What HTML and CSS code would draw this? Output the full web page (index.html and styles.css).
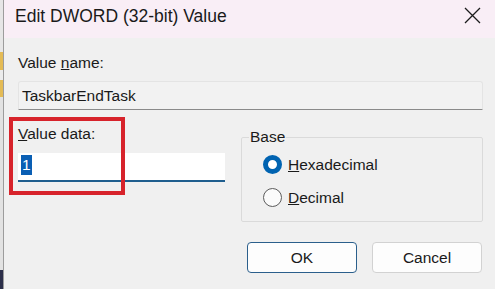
FILE: index.html
```html
<!DOCTYPE html>
<html lang="en">
<head>
  <meta charset="UTF-8">
  <meta name="viewport" content="width=device-width, initial-scale=1.0">
  <title>Edit DWORD (32-bit) Value</title>
  <link rel="stylesheet" href="styles.css">
</head>
<body>

  <!-- Window behind the dialog -->
  <div class="backdrop"></div>

  <div class="dialog">
    <!-- Title bar -->
    <div class="titlebar">
      <span class="title">Edit DWORD (32-bit) Value</span>
      <svg class="close" width="17" height="17" viewBox="0 0 17 17">
        <path d="M1 1 L16 16 M16 1 L1 16" stroke="#1c1c1c" stroke-width="1.3" fill="none"/>
      </svg>
    </div>

    <div class="content">
      <div class="label">Value <u>n</u>ame:</div>
      <div class="name-field">TaskbarEndTask</div>

      <div class="row">
        <div class="data-col">
          <div class="label"><u>V</u>alue data:</div>
          <div class="data-field"><span class="selected">1</span></div>
          <!-- Red annotation box -->
          <div class="marker"></div>
        </div>

        <fieldset class="base">
          <legend>Base</legend>
          <div class="radio-row">
            <span class="radio checked"></span>
            <span><u>H</u>exadecimal</span>
          </div>
          <div class="radio-row">
            <span class="radio"></span>
            <span><u>D</u>ecimal</span>
          </div>
        </fieldset>
      </div>

      <div class="buttons">
        <button class="btn default">OK</button>
        <button class="btn">Cancel</button>
      </div>
    </div>
  </div>

</body>
</html>
```

FILE: styles.css
```css
body {
  margin: 0;
  width: 495px;
  height: 289px;
  display: flex;
  overflow: hidden;
  font-family: 'Liberation Sans', Arial, sans-serif;
  color: #1a1a1a;
  background: #f0f0f0;
}

.backdrop {
  width: 3px;
  flex-shrink: 0;
  background: linear-gradient(to bottom,
    #e6e6e6 0, #e6e6e6 52px,
    #e4bb55 52px, #e4bb55 70px,
    #ececec 70px, #ececec 80px,
    #e4bb55 80px, #e4bb55 97px,
    #e2e2e2 97px, #e2e2e2 270px,
    #2c2f4a 270px);
}

.dialog {
  flex: 1;
  border-left: 1px solid #9c9c9c;
  display: flex;
  flex-direction: column;
  background: #f0f0f0;
}

.titlebar {
  height: 38px;
  box-sizing: border-box;
  background: #f9eef6;
  display: flex;
  justify-content: space-between;
  align-items: flex-start;
  padding: 0 14px 0 11px;
}

.title {
  font-size: 17.5px;
  line-height: 20px;
  padding-top: 6px;
}

.close {
  margin-top: 7px;
}

.content {
  padding: 0 12px 0 14px;
}

.label {
  font-size: 15.5px;
  line-height: 18px;
}

.content > .label {
  margin-top: 16px;
}

.name-field {
  margin-top: 9px;
  height: 29px;
  box-sizing: border-box;
  border: 1px solid #e4e4e4;
  border-bottom-color: #8a8a8a;
  border-radius: 3px 3px 0 0;
  background: #f2f2f2;
  padding-left: 3px;
  font-size: 15.5px;
  line-height: 27px;
}

.row {
  display: flex;
  gap: 16px;
  margin-top: 15px;
  align-items: flex-start;
}

.data-col {
  position: relative;
  width: 207px;
}

.data-field {
  margin-top: 10px;
  height: 29px;
  box-sizing: border-box;
  background: #fff;
  border-bottom: 2px solid #1f5e8e;
  padding: 2px 0 0 3px;
}

.selected {
  display: inline-block;
  background: #0a5fb4;
  color: #fff;
  font-size: 15.5px;
  line-height: 20px;
  padding: 0 1px;
}

.marker {
  position: absolute;
  left: -9px;
  top: -8px;
  width: 116px;
  height: 78px;
  box-sizing: border-box;
  border: 4px solid #d7232b;
}

.base {
  margin: 3px 0 0;
  flex: 1;
  border: 1px solid #dadada;
  border-radius: 2px;
  padding: 2px 0 7px 7px;
  font-size: 15.5px;
}

.base legend {
  padding: 0 1px;
  line-height: 18px;
}

.radio-row {
  height: 33px;
  display: flex;
  align-items: center;
  gap: 6px;
  margin-left: 14px;
}

.radio {
  width: 19px;
  height: 19px;
  box-sizing: border-box;
  border-radius: 50%;
  border: 1px solid #5c5c5c;
  background: #fbfbfb;
}

.radio.checked {
  border: 5.5px solid #0063b1;
  background: #fff;
}

.buttons {
  display: flex;
  justify-content: flex-end;
  gap: 15px;
  margin-top: 20px;
  padding-right: 1px;
}

.btn {
  width: 110px;
  height: 31px;
  background: #fdfdfd;
  border: 1px solid #d2d2d2;
  border-radius: 4px;
  font-family: 'Liberation Sans', Arial, sans-serif;
  font-size: 15.5px;
  color: #1a1a1a;
  padding: 0;
}

.btn.default {
  border-color: #2b5f8c;
}
```
